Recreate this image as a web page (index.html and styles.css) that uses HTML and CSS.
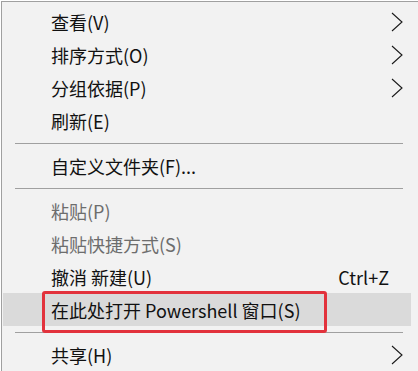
FILE: index.html
```html
<!DOCTYPE html>
<html lang="zh-CN">
<head>
  <meta charset="UTF-8" />
  <title>右键菜单</title>
  <link rel="stylesheet" href="styles.css">
</head>
<body>
  <div class="menu">
    <div class="item"><span class="label">查看(V)</span><span class="arrow"><svg width="12" height="20" viewBox="0 0 12 20"><polyline points="1,1 11,10 1,19" /></svg></span></div>
    <div class="item"><span class="label">排序方式(O)</span><span class="arrow"><svg width="12" height="20" viewBox="0 0 12 20"><polyline points="1,1 11,10 1,19" /></svg></span></div>
    <div class="item"><span class="label">分组依据(P)</span><span class="arrow"><svg width="12" height="20" viewBox="0 0 12 20"><polyline points="1,1 11,10 1,19" /></svg></span></div>
    <div class="item"><span class="label">刷新(E)</span></div>
    <div class="sep"></div>
    <div class="item"><span class="label">自定义文件夹(F)...</span></div>
    <div class="sep"></div>
    <div class="item disabled"><span class="label">粘贴(P)</span></div>
    <div class="item disabled"><span class="label">粘贴快捷方式(S)</span></div>
    <div class="item"><span class="label">撤消 新建(U)</span><span class="shortcut">Ctrl+Z</span><span class="arrow"></span></div>
    <div class="item hover marked"><span class="label">在此处打开 Powershell 窗口(S)</span></div>
    <div class="sep"></div>
    <div class="item"><span class="label">共享(H)</span><span class="arrow"><svg width="12" height="20" viewBox="0 0 12 20"><polyline points="1,1 11,10 1,19" /></svg></span></div>
  </div>
</body>
</html>
```

FILE: styles.css
```css
* {
  box-sizing: border-box;
  margin: 0;
  padding: 0;
}
body {
  background: #ffffff;
  font-family: "Noto Sans CJK SC", "Noto Sans", sans-serif;
  font-size: 18px;
  color: #111;
  overflow: hidden;
}
.menu {
  margin: 1px 0 0 1px;
  width: 417px;
  height: 370px;
  background: #f2f2f2;
  border-top: 1px solid #a0a0a0;
  border-left: 1px solid #a0a0a0;
  padding-top: 3px;
}
.item {
  position: relative;
  display: flex;
  align-items: center;
  height: 33px;
  margin: 0 7px 0 1px;
  padding: 0 8px 0 48px;
}
.label {
  flex: 1;
  white-space: nowrap;
}
.shortcut {
  margin-right: 2px;
}
.arrow {
  width: 12px;
  height: 20px;
  display: flex;
}
.arrow svg polyline {
  fill: none;
  stroke: #1a1a1a;
  stroke-width: 1.1;
}
.disabled {
  color: #6d6d6d;
}
.hover {
  background: #dadada;
}
.marked::after {
  content: "";
  position: absolute;
  left: 39px;
  top: -2px;
  width: 279px;
  height: 36px;
  border: 3px solid #e2323c;
  border-radius: 3px;
}
.sep {
  height: 1px;
  background: #a0a0a0;
  margin: 6px 15px 5px 13px;
}
```
